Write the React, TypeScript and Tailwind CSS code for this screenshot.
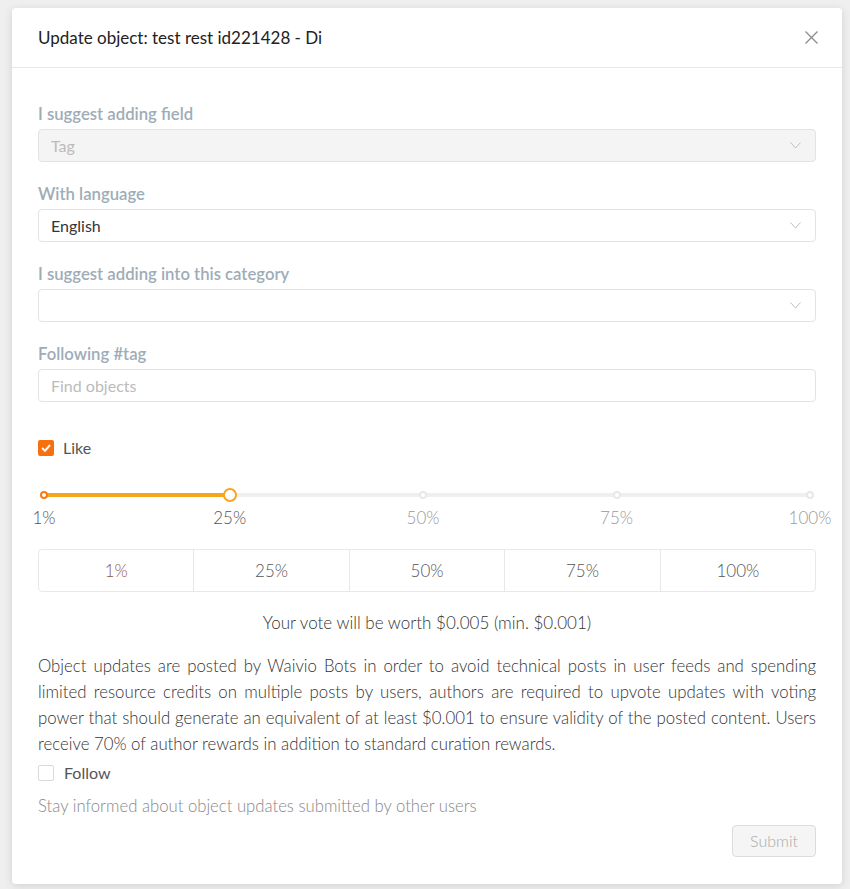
const marks = [
  { label: "1%", pos: "left-[0%]", dot: "border-[#f87a16]", text: "text-[#555]" },
  { label: "25%", pos: "left-[24.24%]", dot: "", text: "text-[#555]" },
  { label: "50%", pos: "left-[49.49%]", dot: "border-[#e8e8e8]", text: "text-[#999]" },
  { label: "75%", pos: "left-[74.75%]", dot: "border-[#e8e8e8]", text: "text-[#999]" },
  { label: "100%", pos: "left-[100%]", dot: "border-[#e8e8e8]", text: "text-[#999]" },
];

const presets = ["1%", "25%", "50%", "75%", "100%"];

function Chevron() {
  return (
    <svg width="11" height="7" viewBox="0 0 11 7" className="shrink-0">
      <polyline points="0.5,0.5 5.5,6 10.5,0.5" fill="none" stroke="#bfbfbf" strokeWidth="1" />
    </svg>
  );
}

function Label({ children }: { children: React.ReactNode }) {
  return <div className="mb-[4px] text-[16.7px] font-semibold leading-[22px] text-[#9eacb7]">{children}</div>;
}

function Select({ value, disabled }: { value?: string; disabled?: boolean }) {
  return (
    <div
      className={`flex h-[33px] items-center justify-between rounded-[4px] border border-[#e3e3e3] pl-[12px] pr-[14px] ${
        disabled ? "bg-[#f4f4f4] text-[#bbb]" : "bg-white text-[#353535]"
      }`}
    >
      <span className="text-[16px]">{value}</span>
      <Chevron />
    </div>
  );
}

export default function App() {
  return (
    <div className="min-h-screen bg-[#efefef] pl-[12px] pt-[8px] font-['Lato','Liberation_Sans',sans-serif]">
      <div className="w-[830px] rounded-[4px] bg-white shadow-[0_2px_10px_rgba(0,0,0,0.12)]">
        {/* Header */}
        <div className="flex h-[60px] items-center justify-between border-b border-[#e8e8e8] pl-[26px] pr-[24px]">
          <h1 className="text-[17px] text-[#222]">Update object: test rest id221428 - Di</h1>
          <svg width="13" height="13" viewBox="0 0 13 13">
            <path d="M0.5 0.5 L12.5 12.5 M12.5 0.5 L0.5 12.5" stroke="#8c8c8c" strokeWidth="1.3" />
          </svg>
        </div>

        {/* Body */}
        <div className="px-[26px] pb-[27px] pt-[35px]">
          <Label>I suggest adding field</Label>
          <Select value="Tag" disabled />

          <div className="mt-[21px]">
            <Label>With language</Label>
            <Select value="English" />
          </div>

          <div className="mt-[21px]">
            <Label>I suggest adding into this category</Label>
            <Select />
          </div>

          <div className="mt-[21px]">
            <Label>Following #tag</Label>
            <div className="flex h-[33px] items-center rounded-[4px] border border-[#e3e3e3] pl-[12px] text-[16px] text-[#bbb]">
              Find objects
            </div>
          </div>

          {/* Like */}
          <div className="mt-[34px] flex h-[24px] items-center gap-[9px]">
            <span className="flex h-[16px] w-[16px] items-center justify-center rounded-[2px] bg-[#f7700f]">
              <svg width="10" height="8" viewBox="0 0 10 8">
                <polyline points="1,4 4,6.8 9,1" fill="none" stroke="#fff" strokeWidth="2" />
              </svg>
            </span>
            <span className="text-[16px] text-[#555]">Like</span>
          </div>

          {/* Slider */}
          <div className="relative mx-[6px] mb-[20px] mt-[29px] h-[40px]">
            <div className="absolute left-0 right-0 top-[4px] h-[4px] rounded-full bg-[#efefef]" />
            <div className="absolute left-0 top-[4px] h-[4px] w-[24.24%] rounded-full bg-[#f8a51e]" />
            {marks.map((m, i) =>
              i === 1 ? (
                <span
                  key={m.label}
                  className={`absolute top-[-1px] h-[14px] w-[14px] -translate-x-1/2 rounded-full border-2 border-[#f8a51e] bg-white ${m.pos}`}
                />
              ) : (
                <span
                  key={m.label}
                  className={`absolute top-[2px] h-[8px] w-[8px] -translate-x-1/2 rounded-full border-2 bg-white ${m.dot} ${m.pos}`}
                />
              )
            )}
            {marks.map(m => (
              <span
                key={m.label + "t"}
                className={`absolute top-[19px] -translate-x-1/2 text-[17px] font-light leading-[20px] ${m.text} ${m.pos}`}
              >
                {m.label}
              </span>
            ))}
          </div>

          {/* Preset buttons */}
          <div className="flex h-[43px] rounded-[4px] border border-[#e8e8e8]">
            {presets.map((p, i) => (
              <div
                key={p}
                className={`flex flex-1 items-center justify-center text-[17px] font-light ${
                  i > 0 ? "border-l border-[#e8e8e8]" : ""
                } ${i === 0 ? "text-[#8b5a4a]" : "text-[#555]"}`}
              >
                {p}
              </div>
            ))}
          </div>

          <p className="mt-[20px] text-center text-[17px] font-light leading-[22px] text-[#333]">
            Your vote will be worth $0.005 (min. $0.001)
          </p>

          <p className="mt-[19px] text-justify text-[16.8px] font-light leading-[26px] text-[#333]">
            Object updates are posted by Waivio Bots in order to avoid technical posts in user feeds and spending
            limited resource credits on multiple posts by users, authors are required to upvote updates with voting
            power that should generate an equivalent of at least $0.001 to ensure validity of the posted content.
            Users receive 70% of author rewards in addition to standard curation rewards.
          </p>

          {/* Follow */}
          <div className="mt-[5px] flex h-[22px] items-center gap-[10px]">
            <span className="h-[16px] w-[16px] rounded-[2px] border border-[#d9d9d9] bg-white" />
            <span className="text-[16px] text-[#555]">Follow</span>
          </div>

          <p className="mt-[11px] text-[16.7px] font-light leading-[22px] text-[#888]">
            Stay informed about object updates submitted by other users
          </p>

          <div className="mt-[8px] flex justify-end">
            <button className="h-[32px] w-[84px] rounded-[4px] border border-[#dcdcdc] bg-[#f5f5f5] text-[16px] font-light text-[#aaa]">
              Submit
            </button>
          </div>
        </div>
      </div>
    </div>
  );
}
